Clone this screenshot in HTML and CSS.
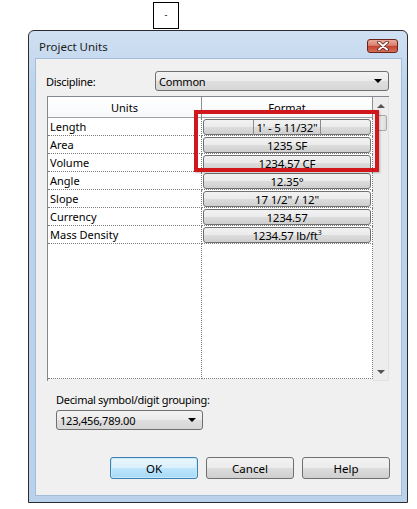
FILE: index.html
```html
<!DOCTYPE html>
<html>
<head>
    <title>Project Units</title>
    <link rel="stylesheet" href="styles.css">
</head>
<body>
    <div class="marker"><span>-</span></div>

    <div class="window">
        <div class="titlebar">
            <span class="title">Project Units</span>
            <button class="close-btn" title="Close">
                <svg width="14" height="10" viewBox="0 0 14 10">
                    <path d="M3 1.5 L11 8.5 M11 1.5 L3 8.5" stroke="#5b1a12" stroke-width="3.6" stroke-linecap="round"/>
                    <path d="M3 1.5 L11 8.5 M11 1.5 L3 8.5" stroke="#fff" stroke-width="2" stroke-linecap="round"/>
                </svg>
            </button>
        </div>

        <div class="client">
            <div class="field-row">
                <label class="field-label">Discipline:</label>
                <div class="combo combo-wide">
                    <span>Common</span>
                    <span class="combo-arrow"></span>
                </div>
            </div>

            <div class="units-list">
                <div class="units-grid">
                    <div class="head head-name">Units</div>
                    <div class="head head-fmt">Format</div>

                    <div class="cell name">Length</div>
                    <div class="cell fmt"><button class="fmt-btn"><span class="focus">1' - 5 11/32"</span></button></div>
                    <div class="cell name">Area</div>
                    <div class="cell fmt"><button class="fmt-btn">1235 SF</button></div>
                    <div class="cell name">Volume</div>
                    <div class="cell fmt"><button class="fmt-btn">1234.57 CF</button></div>
                    <div class="cell name">Angle</div>
                    <div class="cell fmt"><button class="fmt-btn">12.35°</button></div>
                    <div class="cell name">Slope</div>
                    <div class="cell fmt"><button class="fmt-btn">17 1/2" / 12"</button></div>
                    <div class="cell name">Currency</div>
                    <div class="cell fmt"><button class="fmt-btn">1234.57</button></div>
                    <div class="cell name">Mass Density</div>
                    <div class="cell fmt"><button class="fmt-btn">1234.57 lb/ft<sup>3</sup></button></div>

                    <!-- empty space under the last row keeps the column lines -->
                    <div class="cell name"></div>
                    <div class="cell fmt"></div>
                </div>

                <div class="scrollbar">
                    <div class="scroll-arrow"><span class="tri-up"></span></div>
                    <div class="scroll-thumb"></div>
                    <div class="scroll-track"></div>
                    <div class="scroll-arrow"><span class="tri-down"></span></div>
                </div>

                <div class="callout"></div>
            </div>

            <div class="decimal">
                <label class="field-label">Decimal symbol/digit grouping:</label>
                <div class="combo combo-small">
                    <span>123,456,789.00</span>
                    <span class="combo-arrow"></span>
                </div>
            </div>

            <div class="actions">
                <button class="btn btn-default">OK</button>
                <button class="btn">Cancel</button>
                <button class="btn">Help</button>
            </div>
        </div>
    </div>
</body>
</html>
```

FILE: styles.css
```css
body {
    margin: 0;
    background: #fff;
    font-family: "Noto Sans", Arial, sans-serif;
    font-size: 11px;
    color: #000;
}
.marker {
    margin: 2px 0 0 153px;
    width: 24px;
    height: 25px;
    border: 1px solid #000;
    display: flex;
    align-items: center;
    justify-content: center;
    font-size: 9px;
    line-height: 1;
}
.marker span {
    margin-top: -3px;
}
.window {
    margin: 1px 0 0 28px;
    width: 380px;
    height: 473px;
    box-sizing: border-box;
    border: 1px solid #2b2b2b;
    border-radius: 6px 6px 0 0;
    background: linear-gradient(#d0e0f2, #bcd3ec 60px, #b9d1ea);
    display: flex;
    flex-direction: column;
}
.titlebar {
    height: 27px;
    display: flex;
    align-items: center;
    justify-content: space-between;
    padding: 0 9px 0 10px;
}
.title {
    font-size: 11.5px;
    color: #1b1b1b;
    margin-top: 4px;
}
.close-btn {
    width: 31px;
    height: 14px;
    margin-top: 2px;
    padding: 0;
    border: 1px solid #6d2219;
    border-radius: 3px;
    background: linear-gradient(#e9a99d, #d9826f 45%, #c4412c 50%, #d4705b);
    display: flex;
    align-items: center;
    justify-content: center;
}
.client {
    flex: 1;
    margin: 0 5px 6px 6px;
    border: 1px solid #a3bdd8;
    background: #f0f0f0;
    padding: 12px 12px 0 10px;
    display: flex;
    flex-direction: column;
}
.field-row {
    display: flex;
    align-items: center;
    justify-content: space-between;
}
.field-label {
    display: block;
    letter-spacing: -0.3px;
}
.combo {
    height: 20px;
    box-sizing: border-box;
    border: 1px solid #707070;
    border-radius: 3px;
    background: linear-gradient(#f3f3f3, #ebebeb 50%, #dedede 51%, #d7d7d7);
    display: flex;
    align-items: center;
    justify-content: space-between;
    padding: 0 6px 0 3px;
    letter-spacing: -0.2px;
}
.combo-wide {
    width: 234px;
}
.combo-small {
    width: 147px;
    margin-top: 3px;
}
.combo-arrow {
    width: 0;
    height: 0;
    border-left: 4px solid transparent;
    border-right: 4px solid transparent;
    border-top: 4px solid #000;
}

/* units table */
.units-list {
    position: relative;
    margin: 5px 0 0 1px;
    height: 284px;
    display: flex;
    border-top: 1px solid #828790;
    border-left: 1px solid #828790;
}
.units-grid {
    width: 325px;
    display: grid;
    grid-template-columns: 154px 171px;
    grid-template-rows: 21px repeat(7, 18px) 1fr;
    background: #fff;
    margin-bottom: 2px;
}
.head {
    box-sizing: border-box;
    display: flex;
    align-items: center;
    justify-content: center;
    background: linear-gradient(#fff, #f7f8fa);
    border-bottom: 1px solid #a0a0a0;
    border-right: 1px solid #8f8f8f;
}
.cell {
    box-sizing: border-box;
    border-right: 1px dotted #7a7a7a;
    border-bottom: 1px dotted #7a7a7a;
}
.name {
    display: flex;
    align-items: center;
    padding-left: 2px;
}
.fmt {
    padding: 1px 1px 0 1px;
}
.fmt-btn {
    width: 100%;
    height: 16px;
    padding: 0;
    border: 1px solid #707070;
    border-radius: 3px;
    background: linear-gradient(#f2f2f2, #ebebeb 50%, #dddddd 51%, #cfcfcf);
    font-family: inherit;
    font-size: 11.5px;
    letter-spacing: -0.2px;
    line-height: 13px;
    color: #000;
}
.fmt-btn sup {
    font-size: 7px;
    vertical-align: 5px;
    line-height: 0;
}
.focus {
    border-left: 1px solid #8a8a8a;
    border-right: 1px solid #8a8a8a;
    padding: 0 2px;
}
.scrollbar {
    width: 17px;
    display: flex;
    flex-direction: column;
    background: #ededed;
    border-right: 1px solid #e2e2e2;
    border-bottom: 1px solid #e2e2e2;
}
.scroll-arrow {
    height: 17px;
    display: flex;
    align-items: center;
    justify-content: center;
}
.tri-up, .tri-down {
    width: 0;
    height: 0;
    border-left: 4px solid transparent;
    border-right: 4px solid transparent;
}
.tri-up {
    border-bottom: 4px solid #555;
}
.tri-down {
    border-top: 4px solid #555;
}
.scroll-thumb {
    height: 14px;
    margin: 1px 1px 0 4px;
    border: 1px solid #a8a8a8;
    border-radius: 2px;
    background: linear-gradient(90deg, #f4f4f4, #dcdcdc);
}
.scroll-track {
    flex: 1;
}
/* red highlight drawn over the first three formats */
.callout {
    position: absolute;
    left: 146px;
    top: 13px;
    width: 185px;
    height: 62px;
    box-sizing: border-box;
    border: 4px solid #d0181c;
    box-shadow: 1px 1px 2px rgba(0, 0, 0, 0.25);
}

.decimal {
    margin: 11px 0 0 10px;
}
.actions {
    display: flex;
    justify-content: flex-end;
    gap: 8px;
    margin: 27px -1px 0 0;
}
.btn {
    width: 88px;
    height: 22px;
    border: 1px solid #707070;
    border-radius: 3px;
    background: linear-gradient(#f2f2f2, #ebebeb 50%, #dddddd 51%, #cfcfcf);
    font-family: inherit;
    font-size: 11.5px;
    color: #000;
}
.btn-default {
    border-color: #3c7fb1;
    background: linear-gradient(#eaf6fd, #d9f0fc 50%, #bee6fd 51%, #a7d9f5);
    box-shadow: inset 0 0 0 1px #c9e9fb;
}
```
